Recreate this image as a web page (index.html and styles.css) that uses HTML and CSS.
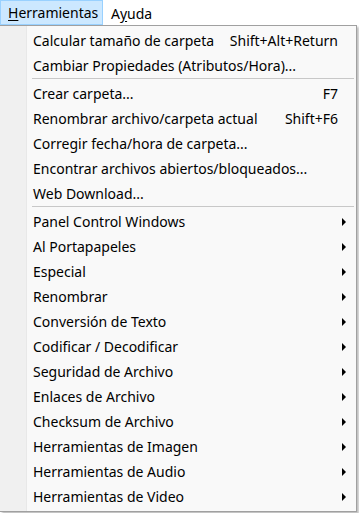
FILE: index.html
```html
<!DOCTYPE html>
<html lang="es">
<head>
<meta charset="utf-8">
<title>Herramientas</title>
<link rel="stylesheet" href="styles.css">
</head>
<body>
<div class="menubar">
  <span class="top-item active"><u>H</u>erramientas</span>
  <span class="top-item">A<u>y</u>uda</span>
</div>
<div class="popup">
  <div class="item"><span class="label">Calcular tamaño de carpeta</span><span class="key">Shift+Alt+Return</span></div>
  <div class="item"><span class="label">Cambiar Propiedades (Atributos/Hora)...</span></div>
  <div class="sep"></div>
  <div class="item"><span class="label">Crear carpeta...</span><span class="key">F7</span></div>
  <div class="item"><span class="label">Renombrar archivo/carpeta actual</span><span class="key">Shift+F6</span></div>
  <div class="item"><span class="label">Corregir fecha/hora de carpeta...</span></div>
  <div class="item"><span class="label">Encontrar archivos abiertos/bloqueados...</span></div>
  <div class="item"><span class="label">Web Download...</span></div>
  <div class="sep"></div>
  <div class="item sub"><span class="label">Panel Control Windows</span><span class="arrow"></span></div>
  <div class="item sub"><span class="label">Al Portapapeles</span><span class="arrow"></span></div>
  <div class="item sub"><span class="label">Especial</span><span class="arrow"></span></div>
  <div class="item sub"><span class="label">Renombrar</span><span class="arrow"></span></div>
  <div class="item sub"><span class="label">Conversión de Texto</span><span class="arrow"></span></div>
  <div class="item sub"><span class="label">Codificar / Decodificar</span><span class="arrow"></span></div>
  <div class="item sub"><span class="label">Seguridad de Archivo</span><span class="arrow"></span></div>
  <div class="item sub"><span class="label">Enlaces de Archivo</span><span class="arrow"></span></div>
  <div class="item sub"><span class="label">Checksum de Archivo</span><span class="arrow"></span></div>
  <div class="item sub"><span class="label">Herramientas de Imagen</span><span class="arrow"></span></div>
  <div class="item sub"><span class="label">Herramientas de Audio</span><span class="arrow"></span></div>
  <div class="item sub"><span class="label">Herramientas de Video</span><span class="arrow"></span></div>
</div>
</body>
</html>
```
FILE: styles.css
```css
html, body {
  margin: 0;
  padding: 0;
  background: #ffffff;
}
body {
  width: 359px;
  height: 513px;
  overflow: hidden;
  font-family: "Noto Sans", "Open Sans", sans-serif;
  font-size: 14px;
  color: #000000;
}
.menubar {
  display: flex;
  height: 25px;
  background: #ffffff;
}
.top-item {
  display: flex;
  align-items: center;
  height: 24px;
  padding: 0 7px;
  border: 1px solid transparent;
  border-bottom: 0;
}
.top-item.active {
  background: #cce8ff;
  border-color: #99d1ff;
  box-sizing: border-box;
  height: 25px;
  width: 103px;
  border-bottom: 1px solid #99d1ff;
}
.top-item u {
  text-decoration: underline;
  text-underline-offset: 2px;
}
.popup {
  width: 357px;
  box-sizing: border-box;
  border-top: 1px solid #a0a0a0;
  border-right: 1px solid #a0a0a0;
  border-bottom: 1px solid #a0a0a0;
  padding: 2px 2px 2px 0;
  background: linear-gradient(to right, #f0f0f0 0, #f0f0f0 26px, #e8e8e8 26px, #e8e8e8 27px, #f9f9f9 27px);
  box-shadow: 2px 2px 2px rgba(0, 0, 0, 0.25);
}
.item {
  display: flex;
  align-items: center;
  height: 25px;
  padding-left: 33px;
  padding-right: 16px;
  white-space: nowrap;
}
.label {
  flex: 1;
}
.key {
  text-align: right;
}
.sub {
  padding-right: 8px;
}
.arrow {
  width: 0;
  height: 0;
  border-top: 4px solid transparent;
  border-bottom: 4px solid transparent;
  border-left: 4px solid #000000;
}
.sep {
  height: 3px;
  margin-left: 32px;
  box-sizing: border-box;
  border-top: 1px solid #c8c8c8;
  margin-top: 0;
}
```
